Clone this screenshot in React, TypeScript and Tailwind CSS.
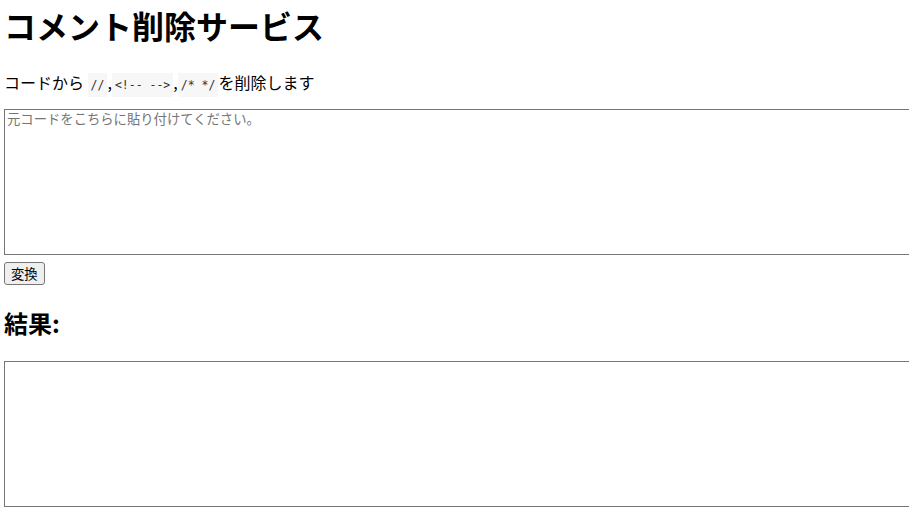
import { useState } from 'react';

const codeClass =
  'bg-[#f7f7f7] text-[#333] px-[3px] py-[5px] text-[11.5px] font-["DejaVu_Sans_Mono","Liberation_Mono",monospace]';

const App = () => {
  const [source, setSource] = useState('');
  const [result, setResult] = useState('');

  const convert = () => {
    const out = source
      .replace(/<!--[\s\S]*?-->/g, '')
      .replace(/\/\*[\s\S]*?\*\//g, '')
      .replace(/\/\/.*$/gm, '');
    setResult(out);
  };

  return (
    <div className='overflow-x-hidden min-h-screen bg-white text-black px-1 py-1 font-["Noto_Sans_CJK_JP","Noto_Sans",sans-serif]'>
      <h1 className="text-[32px] font-bold leading-[42px]">コメント削除サービス</h1>

      <p className="mt-6 text-[16px] leading-[24px]">
        コードから <code className={codeClass}>//</code>,<code className={codeClass}>&lt;!-- --&gt;</code>,<code className={codeClass}>/* */</code>を削除します
      </p>

      <textarea
        value={source}
        onChange={(e) => setSource(e.target.value)}
        placeholder="元コードをこちらに貼り付けてください。"
        className="mt-[12px] block h-[146px] w-[calc(100%+24px)] resize-none border border-[#767676] px-[2px] py-[1px] text-[13.33px] leading-[16px] placeholder:text-[#757575] focus:outline-none"
      />

      <button
        type="button"
        onClick={convert}
        className="mt-[7px] block h-[23px] rounded-[3px] border border-[#767676] bg-[#efefef] px-[6px] text-[13.33px] leading-none"
      >
        変換
      </button>

      <h2 className="mt-[20px] text-[24px] font-bold leading-[36px]">結果:</h2>

      <textarea
        value={result}
        readOnly
        className="mt-[20px] block h-[146px] w-[calc(100%+24px)] resize-none border border-[#767676] px-[2px] py-[1px] text-[13.33px] leading-[16px] focus:outline-none"
      />
    </div>
  );
};

export default App;
